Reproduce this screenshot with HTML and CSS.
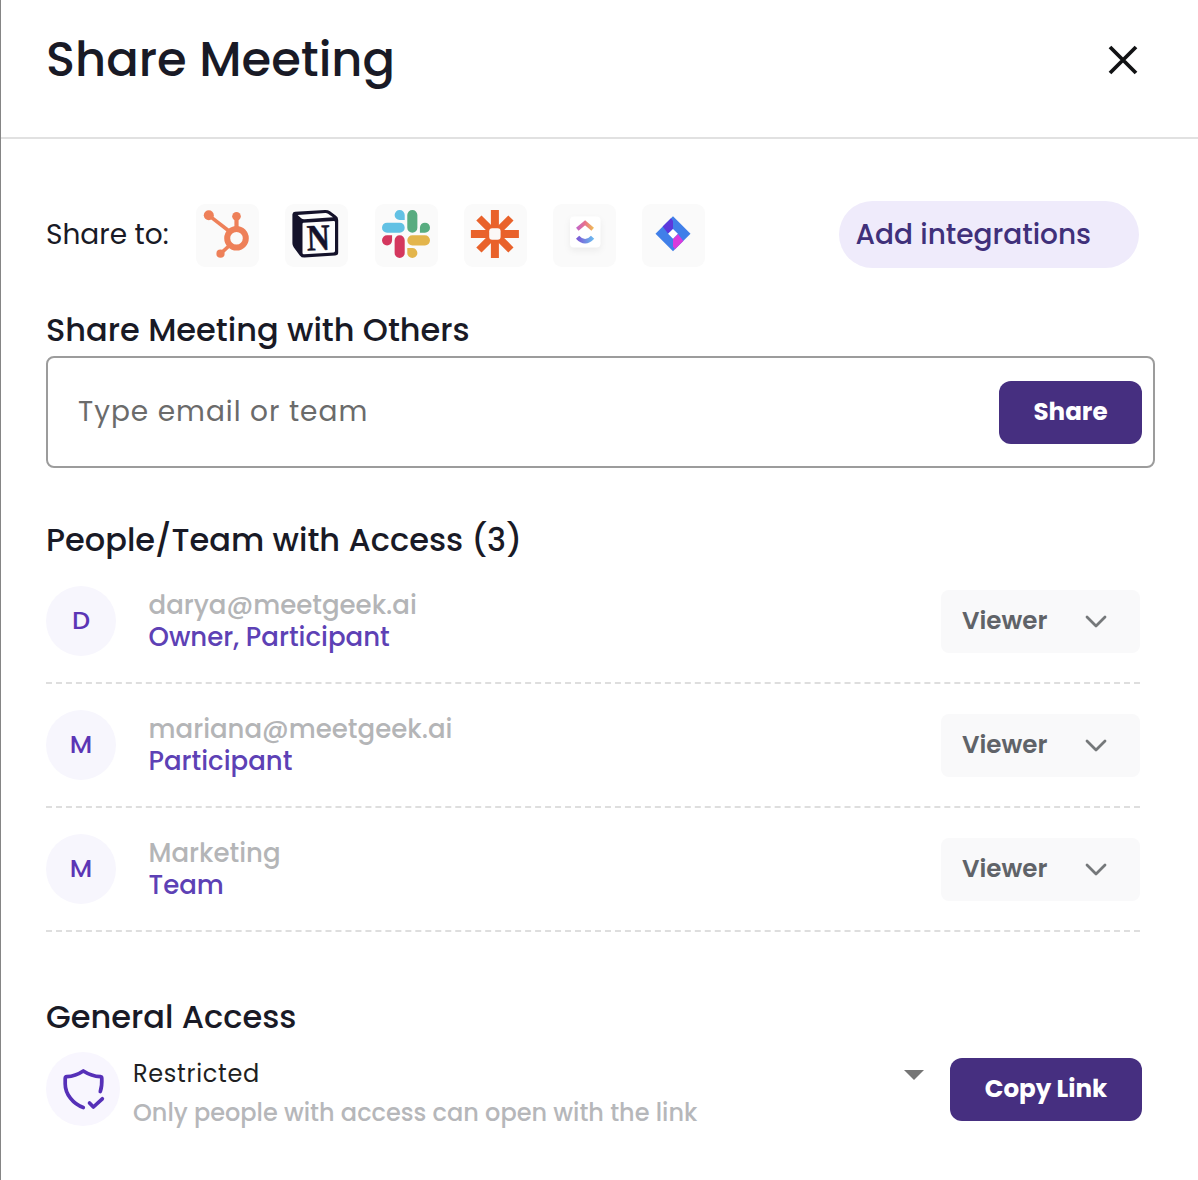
FILE: index.html
```html
<!DOCTYPE html>
<html lang="en">
<head>
<meta charset="utf-8">
<title>Share Meeting</title>
<link rel="stylesheet" href="styles.css">
</head>
<body>
<div class="dialog">
  <header class="dialog-header">
    <h1 class="title">Share Meeting</h1>
    <button class="close" aria-label="Close">
      <svg width="30" height="30" viewBox="0 0 30 30"><path d="M2 2L28 28M28 2L2 28" stroke="#111214" stroke-width="3.8" fill="none"/></svg>
    </button>
  </header>

  <main class="content">
    <section class="share-to">
      <span class="share-label">Share to:</span>
      <div class="apps">
        <div class="app">
          <svg viewBox="0 0 63 63"><g stroke="#ee8059" fill="none"><path d="M12.8 11.3L33 27" stroke-width="3.6"/><path d="M40.5 12.3V26" stroke-width="4.2"/><path d="M34 41L24.5 49.7" stroke-width="3.6"/><circle cx="40.5" cy="34.3" r="9.3" stroke-width="6"/></g><g fill="#ee8059"><circle cx="12.8" cy="11.3" r="5"/><circle cx="40.5" cy="12.3" r="4.3"/><circle cx="24.5" cy="49.7" r="4.1"/></g></svg>
        </div>
        <div class="app">
          <svg viewBox="0 0 63 63"><path d="M10 7.8L40 5.9Q43 5.8 45 7.3L51 11.7Q53.2 13.3 53.2 16V48.5Q53.2 51.3 50.2 51.6L19.5 53.6Q16.5 53.7 14.8 51.4L8.7 43.3Q7.4 41.5 7.4 39.3V10.5Q7.5 8 10 7.8Z" fill="#14122a"/><path d="M12.6 11L40.2 8.9Q41.8 8.8 43 9.7L48 13.3L19.4 15.2Q17.5 15.3 16.2 14.2Z" fill="#fdfdfd"/><path d="M18.5 18.7L48.8 16.9Q50 16.9 50 18.1V47Q50 48.4 48.6 48.5L18.9 50.3Q17.5 50.3 17.5 48.9V19.9Q17.5 18.8 18.5 18.700Z" fill="#fdfdfd"/><text class="notion-letter" x="21.8" y="46" textLength="23" lengthAdjust="spacingAndGlyphs" transform="rotate(-2 33 34)">N</text></svg>
        </div>
        <div class="app">
          <svg viewBox="0 0 63 63"><g transform="translate(7 6) scale(2)"><path fill="#d4375e" d="M5.042 15.165a2.528 2.528 0 0 1-2.52 2.523A2.528 2.528 0 0 1 0 15.165a2.527 2.527 0 0 1 2.522-2.52h2.52zM6.313 15.165a2.527 2.527 0 0 1 2.521-2.52 2.527 2.527 0 0 1 2.521 2.52v6.313A2.528 2.528 0 0 1 8.834 24a2.528 2.528 0 0 1-2.521-2.522z"/><path fill="#62c1e4" d="M8.834 5.042a2.528 2.528 0 0 1-2.521-2.52A2.528 2.528 0 0 1 8.834 0a2.528 2.528 0 0 1 2.521 2.522v2.52zM8.834 6.313a2.528 2.528 0 0 1 2.521 2.521 2.528 2.528 0 0 1-2.521 2.521H2.522A2.528 2.528 0 0 1 0 8.834a2.528 2.528 0 0 1 2.522-2.521z"/><path fill="#58ac80" d="M18.956 8.834a2.528 2.528 0 0 1 2.522-2.521A2.528 2.528 0 0 1 24 8.834a2.528 2.528 0 0 1-2.522 2.521h-2.522zM17.688 8.834a2.528 2.528 0 0 1-2.523 2.521 2.527 2.527 0 0 1-2.52-2.521V2.522A2.527 2.527 0 0 1 15.165 0a2.528 2.528 0 0 1 2.523 2.522z"/><path fill="#e3b54c" d="M15.165 18.956a2.528 2.528 0 0 1 2.523 2.522A2.528 2.528 0 0 1 15.165 24a2.527 2.527 0 0 1-2.52-2.522v-2.522zM15.165 17.688a2.527 2.527 0 0 1-2.52-2.523 2.526 2.526 0 0 1 2.52-2.52h6.313A2.527 2.527 0 0 1 24 15.165a2.528 2.528 0 0 1-2.522 2.523z"/></g></svg>
        </div>
        <div class="app">
          <svg viewBox="0 0 63 63"><g stroke="#e9622b" stroke-width="8"><path d="M30.9 6V54M6.9 30H54.9"/><path d="M14.9 14L46.9 46M46.9 14L14.9 46" stroke-width="7.4"/></g><rect x="25.2" y="24.3" width="11.4" height="11.4" rx="3" fill="#fbf8f7"/></svg>
        </div>
        <div class="app">
          <svg viewBox="0 0 63 63"><defs><linearGradient id="cu-top" x1="0" x2="1"><stop offset="0" stop-color="#c566c6"/><stop offset=".5" stop-color="#e8708a"/><stop offset="1" stop-color="#eeb85a"/></linearGradient><linearGradient id="cu-bottom" x1="0" x2="1"><stop offset="0" stop-color="#7b5bd6"/><stop offset="1" stop-color="#6bb6ee"/></linearGradient></defs><rect class="app-card" x="17" y="12.5" width="30.5" height="31" rx="4"/><path d="M24.3 25.2L32.1 18.8L39.7 25.2" fill="none" stroke="url(#cu-top)" stroke-width="4"/><path d="M24.6 33.2Q32.1 41.4 39.6 33.2" fill="none" stroke="url(#cu-bottom)" stroke-width="4.4"/></svg>
        </div>
        <div class="app">
          <svg viewBox="0 0 63 63"><path d="M31 12.3L48.5 29.8L31 47.3L13.5 29.8Z" fill="#407fe9"/><path d="M29 14.3L31 17V24.5L26 29.6L20.7 22.6Z" fill="#5c37dc"/><path d="M33 45.3L31 42.6V35.1L36 30L41.3 37Z" fill="#d93bdc"/><path d="M31 24.9L35.9 29.8L31 34.7L26.1 29.8Z" fill="#fff"/></svg>
        </div>
      </div>
      <button class="add">Add integrations</button>
    </section>

    <section class="invite">
      <h2 class="heading">Share Meeting with Others</h2>
      <div class="field">
        <span class="placeholder">Type email or team</span>
        <button class="primary share-btn">Share</button>
      </div>
    </section>

    <section class="people">
      <h2 class="heading">People/Team with Access (3)</h2>
      <ul class="list">
        <li class="person">
          <span class="avatar">D</span>
          <div class="who"><span class="name">darya@meetgeek.ai</span><span class="role">Owner, Participant</span></div>
          <button class="select">Viewer<svg width="22" height="14" viewBox="0 0 22 14"><path d="M2 2L11 11L20 2" fill="none" stroke="#75787a" stroke-width="2.8" stroke-linecap="round" stroke-linejoin="round"/></svg></button>
        </li>
        <li class="person">
          <span class="avatar">M</span>
          <div class="who"><span class="name">mariana@meetgeek.ai</span><span class="role">Participant</span></div>
          <button class="select">Viewer<svg width="22" height="14" viewBox="0 0 22 14"><path d="M2 2L11 11L20 2" fill="none" stroke="#75787a" stroke-width="2.8" stroke-linecap="round" stroke-linejoin="round"/></svg></button>
        </li>
        <li class="person">
          <span class="avatar">M</span>
          <div class="who"><span class="name">Marketing</span><span class="role">Team</span></div>
          <button class="select">Viewer<svg width="22" height="14" viewBox="0 0 22 14"><path d="M2 2L11 11L20 2" fill="none" stroke="#75787a" stroke-width="2.8" stroke-linecap="round" stroke-linejoin="round"/></svg></button>
        </li>
      </ul>
    </section>

    <section class="general">
      <h2 class="heading">General Access</h2>
      <div class="access">
        <span class="shield">
          <svg width="44" height="44" viewBox="0 0 44 44"><g fill="none" stroke="#5630b8" stroke-width="3.7" stroke-linecap="round" stroke-linejoin="round"><path d="M21.3 39.500C11 36 3.200 26 3.200 16V10.500Q3.300 8.800 4.800 8.700Q13.500 8.300 21.300 3Q29.500 8.300 38.400 8.700Q39.800 8.900 39.800 10.500C40 15.500 39.700 19.500 38.300 23.500"/><path d="M27.500 35L31.400 39L40.300 30.800"/></g></svg>
        </span>
        <div class="mode">
          <span class="mode-name">Restricted</span>
          <span class="mode-note">Only people with access can open with the link</span>
        </div>
        <svg class="caret" width="20" height="10" viewBox="0 0 20 10"><path d="M0 0H20L10 10Z" fill="#757575"/></svg>
        <button class="primary copy-btn">Copy Link</button>
      </div>
    </section>
  </main>
</div>
</body>
</html>
```
FILE: styles.css
```css
* { box-sizing: border-box; }

body {
  margin: 0;
  background: #fff;
  color: #191a26;
  font-family: "Poppins", "Inter", sans-serif;
  font-weight: 500;
}

h1, h2, ul { margin: 0; padding: 0; font-weight: 500; }
ul { list-style: none; }
svg { display: block; flex: none; }

button {
  border: 0;
  padding: 0;
  background: none;
  font: inherit;
  color: inherit;
  white-space: nowrap;
}

.dialog {
  height: 1180px;
  border-left: 1px solid #858585;
  overflow: hidden;
}

.dialog-header {
  display: flex;
  align-items: flex-start;
  justify-content: space-between;
  height: 139px;
  padding: 30px 60px 0 45px;
  border-bottom: 2px solid #e1e1e1;
}

.title { font-size: 48px; line-height: 60px; }
.close { margin-top: 15px; }

.content { padding: 62px 43px 0 45px; }

.share-to { display: flex; align-items: center; height: 67px; }
.share-label {
  width: 150px;
  font-size: 28px;
  font-weight: 400;
}
.apps { display: flex; gap: 26.3px; padding-top: 1px; }
.app { width: 63px; height: 63px; border-radius: 9px; background: #fafafa; }
.notion-letter { font: bold 37px "Liberation Serif", serif; fill: #14122a; stroke: #14122a; stroke-width: .6px; }
.app-card { fill: #fff; filter: drop-shadow(0 3px 3px rgba(0, 0, 0, .06)); }

.add {
  width: 300px;
  height: 67px;
  margin: 0 16px 0 auto;
  padding-left: 16.5px;
  border-radius: 34px;
  background: #efebfb;
  color: #40307a;
  font-size: 28px;
  text-align: left;
}

.heading { font-size: 32px; line-height: 40px; }

.invite { padding-top: 42px; }
.field {
  display: flex;
  align-items: center;
  justify-content: space-between;
  height: 112px;
  margin-top: 6px;
  padding: 0 11px 0 30px;
  border: 2px solid #9c9c9c;
  border-radius: 8px;
}
.placeholder {
  padding-bottom: 1px;
  color: #6b6b6b;
  font-size: 28px;
  font-weight: 400;
  letter-spacing: 1px;
}

.primary {
  flex: none;
  height: 63px;
  padding-bottom: 2px;
  border-radius: 12px;
  background: #462f80;
  color: #fff;
  font-size: 24.6px;
  font-weight: 700;
}
.share-btn { width: 143px; }
.copy-btn { width: 192px; margin: 6px 13px 0 0; }

.people { padding-top: 52px; }
.list { margin-right: 15px; }
.person {
  display: flex;
  align-items: center;
  height: 124px;
  border-bottom: 2px dashed #dedede;
}
.avatar {
  display: grid;
  place-items: center;
  width: 70px;
  height: 70px;
  padding-bottom: 1px;
  border-radius: 50%;
  background: #f7f6fd;
  color: #5b35b5;
  font-size: 25.5px;
}
.who {
  display: flex;
  flex-direction: column;
  flex: 1;
  padding: 0 0 1px 32.5px;
  font-size: 26px;
  line-height: 32px;
}
.name { color: #b4b5b7; }
.role { color: #5d41b5; }

.select {
  display: flex;
  align-items: center;
  justify-content: space-between;
  width: 199px;
  height: 63px;
  padding: 0 33px 2px 21px;
  border-radius: 8px;
  background: #f9f9fa;
  color: #606368;
  font-size: 24.6px;
  font-weight: 600;
}
.select svg { margin-top: 4px; }

.general { padding-top: 65px; }
.access { display: flex; align-items: flex-start; margin-top: 15px; }
.shield {
  display: grid;
  place-items: center;
  width: 74px;
  height: 74px;
  padding: 1px 0 0 1px;
  border-radius: 50%;
  background: #f8f6fe;
}
.mode {
  display: flex;
  flex-direction: column;
  flex: 1;
  padding: 2px 0 0 13px;
  font-size: 24px;
  line-height: 39px;
}
.mode-name { color: #1e1f22; font-weight: 400; letter-spacing: .7px; }
.mode-note { color: #b6b7ba; }
.caret { margin: 18px 26px 0 0; }
```
